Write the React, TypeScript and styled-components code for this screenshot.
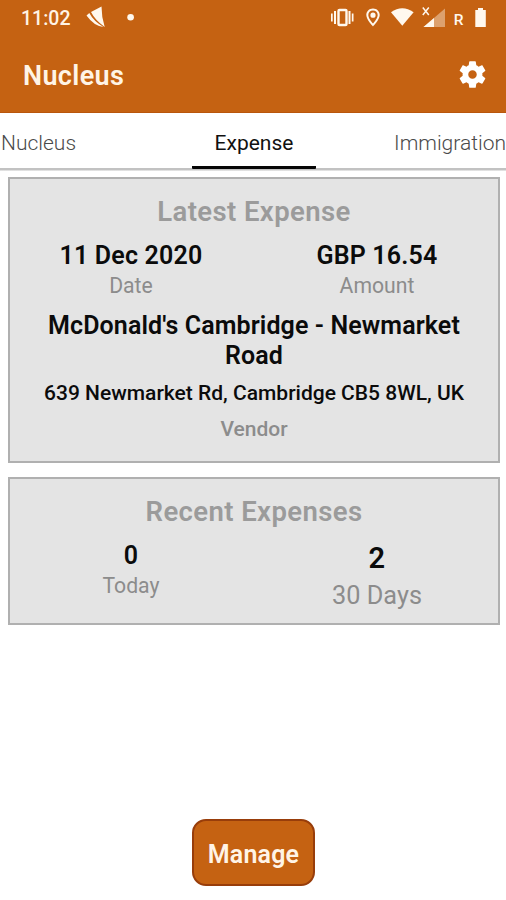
import React from "react";
import styled, { createGlobalStyle } from "styled-components";

const GlobalStyle = createGlobalStyle`
  * { box-sizing: border-box; }
  body { margin: 0; background: #fff; }
`;

const Screen = styled.main`
  width: 506px;
  height: 900px;
  display: flex;
  flex-direction: column;
  overflow: hidden;
  background: #fff;
  font-family: Roboto, "Liberation Sans", sans-serif;
  color: #0b0b0b;
`;

const Header = styled.header`
  height: 113px;
  background: #c56212;
  border-bottom: 1px solid #b9560c;
  color: #fff4e6;
`;

const StatusBar = styled.div`
  height: 36px;
  padding: 0 18px 0 21px;
  display: flex;
  align-items: center;
  justify-content: space-between;
`;

const StatusGroup = styled.div`
  display: flex;
  align-items: center;
`;

const Clock = styled.span`
  width: 65px;
  padding-top: 1px;
  font-size: 19.5px;
  font-weight: 500;
  line-height: 36px;
`;

const AppBar = styled.div`
  height: 76px;
  padding: 0 17px 0 23px;
  display: flex;
  align-items: center;
  justify-content: space-between;
`;

const AppTitle = styled.h1`
  margin: 3px 0 0;
  font-size: 27px;
  font-weight: 600;
  letter-spacing: 0.35px;
  line-height: 32px;
`;

const IconButton = styled.button`
  display: flex;
  padding: 0;
  border: 0;
  background: none;
`;

const Tabs = styled.nav`
  height: 58px;
  display: grid;
  grid-template-columns: 192px 124px 1fr;
  background: linear-gradient(#c2c2c2, #c2c2c2) 0 55px / 100% 2.5px no-repeat;
`;

const Tab = styled.div<{ $active?: boolean; $align: string }>`
  height: ${(p) => (p.$active ? 56 : 57)}px;
  padding: 17px 0 0 ${(p) => (p.$align === "left" ? 1 : 0)}px;
  text-align: ${(p) => p.$align};
  font-size: 21px;
  font-weight: ${(p) => (p.$active ? 400 : 300)};
  line-height: 27px;
  color: ${(p) => (p.$active ? "#111" : "#4a4a4a")};
  border-bottom: ${(p) => (p.$active ? "3px solid #050505" : "0")};
  border-radius: 1px;
`;

const Cards = styled.section`
  padding: 6px 6px 0 8px;
  display: flex;
  flex-direction: column;
  gap: 14px;
`;

const Card = styled.article<{ $height: number }>`
  height: ${(p) => p.$height}px;
  padding-top: 17px;
  background: #e4e4e4;
  border: 2px solid #b0b0b0;
  text-align: center;
`;

const CardTitle = styled.h2`
  margin: 0;
  font-size: 27.5px;
  font-weight: 600;
  letter-spacing: 0.4px;
  line-height: 32px;
  color: #9b9b9b;
`;

const Columns = styled.div`
  display: grid;
  grid-template-columns: 1fr 1fr;
  margin: 12px -2px 0;
`;

const Value = styled.div<{ $large?: boolean }>`
  font-size: ${(p) => (p.$large ? 29 : 25)}px;
  font-weight: 600;
  letter-spacing: 0.2px;
  line-height: ${(p) => (p.$large ? 36 : 32)}px;
`;

const Label = styled.div<{ $large?: boolean }>`
  margin-top: ${(p) => (p.$large ? 5 : 1)}px;
  font-size: ${(p) => (p.$large ? 25.3 : 21.2)}px;
  line-height: ${(p) => (p.$large ? 30 : 26)}px;
  color: #8c8c8c;
`;

const VendorName = styled.div`
  margin: 12px auto 0;
  width: 440px;
  font-size: 25px;
  font-weight: 600;
  letter-spacing: 0.11px;
  line-height: 29.5px;
`;

const Address = styled.div`
  margin-top: 10px;
  font-size: 21px;
  font-weight: 500;
  line-height: 26px;
`;

const VendorLabel = styled.div`
  margin-top: 11px;
  font-size: 21px;
  font-weight: 500;
  line-height: 25px;
  color: #8c8c8c;
`;

const Footer = styled.footer`
  margin-top: auto;
  padding: 0 0 14px 1px;
  display: flex;
  justify-content: center;
`;

const ManageButton = styled.button`
  width: 123px;
  height: 67px;
  padding: 4px 0 0;
  background: #c56212;
  border: 2px solid #983d0a;
  border-radius: 14px;
  font: 600 25px/32px Roboto, "Liberation Sans", sans-serif;
  letter-spacing: 0.2px;
  color: #fff4e6;
`;

const LeftIcons = () => (
  <svg width="50" height="36" viewBox="0 0 50 36" fill="#fff8ee">
    <path d="M5 12L15.500 6.500Q15.500 17 18.700 27Q9 20 5 12Z" />
    <path d="M.5 15.500L3.300 13Q7.500 21 17.500 27Q8 26 .5 15.500Z" />
    <circle cx="44.600" cy="17.300" r="3.300" />
  </svg>
);

const RightIcons = () => (
  <svg width="158" height="36" viewBox="330 0 158 36" fill="#fff8ee">
    <path d="M331 13.500h1.700v8H331zM334 11h2v13h-2zM348.500 11h2v13h-2zM351.800 13.500h1.700v8h-1.700z" />
    <rect x="338.500" y="10" width="8" height="15" rx="1" fill="none" stroke="#fff8ee" strokeWidth="2.400" />
    <path
      fillRule="evenodd"
      d="M373 8.500c-3.900 0-6.700 2.900-6.700 6.600 0 4.800 6.700 11.400 6.700 11.400s6.700-6.600 6.700-11.400c0-3.700-2.800-6.600-6.700-6.600zm0 2c2.800 0 4.700 2 4.700 4.600 0 2.900-2.900 6.500-4.700 8.500-1.800-2-4.700-5.600-4.700-8.500 0-2.600 1.900-4.600 4.700-4.600zm0 2.100a2.600 2.600 0 1 0 0 5.200 2.600 2.600 0 0 0 0-5.200z"
    />
    <path d="M391 12.300Q402.300 4 413.600 12.300L402.300 25.800Z" />
    <path d="M445 8.500V27H423.500Z" opacity=".42" />
    <path d="M434 18V27H423.500Z" />
    <path d="M422.800 7.500l6 7.500M428.800 7.500l-6 7.500" stroke="#fff8ee" strokeWidth="1.500" />
    <text x="453.800" y="24.600" fontSize="15.500" fontWeight="500" fontFamily="Roboto, sans-serif">R</text>
    <path d="M478 8h5v2h2.800v17H475.300V10H478z" />
  </svg>
);

const GearIcon = () => (
  <svg width="33" height="33" viewBox="0 0 24 24" fill="#fff">
    <path d="M19.140 12.940c.04-.3.06-.61.06-.94 0-.32-.02-.64-.07-.94l2.030-1.580c.18-.14.23-.41.12-.61l-1.920-3.320c-.12-.22-.37-.29-.59-.22l-2.390.96c-.5-.38-1.030-.7-1.620-.94l-.36-2.540c-.04-.24-.24-.41-.48-.41h-3.840c-.24 0-.43.17-.47.41l-.36 2.540c-.59.24-1.130.57-1.620.94l-2.390-.96c-.22-.08-.47 0-.59.22L2.740 8.870c-.12.21-.08.47.12.61l2.030 1.580c-.05.3-.09.63-.09.94s.02.64.07.94l-2.030 1.580c-.18.14-.23.41-.12.61l1.920 3.320c.12.22.37.29.59.22l2.390-.96c.5.38 1.030.7 1.620.94l.36 2.540c.05.24.24.41.48.41h3.840c.24 0 .44-.17.47-.41l.36-2.540c.59-.24 1.130-.56 1.620-.94l2.390.96c.22.08.47 0 .59-.22l1.920-3.320c.12-.22.07-.47-.12-.61l-2.010-1.580zM12 15.100c-1.700 0-3.100-1.400-3.100-3.100s1.400-3.100 3.100-3.100 3.100 1.400 3.100 3.100-1.400 3.100-3.100 3.100z" />
  </svg>
);

export default function App() {
  return (
    <Screen>
      <GlobalStyle />
      <Header>
        <StatusBar>
          <StatusGroup>
            <Clock>11:02</Clock>
            <LeftIcons />
          </StatusGroup>
          <RightIcons />
        </StatusBar>
        <AppBar>
          <AppTitle>Nucleus</AppTitle>
          <IconButton aria-label="Settings">
            <GearIcon />
          </IconButton>
        </AppBar>
      </Header>
      <Tabs>
        <Tab $align="left">Nucleus</Tab>
        <Tab $align="center" $active>Expense</Tab>
        <Tab $align="right">Immigration</Tab>
      </Tabs>
      <Cards>
        <Card $height={286}>
          <CardTitle>Latest Expense</CardTitle>
          <Columns>
            <div>
              <Value>11 Dec 2020</Value>
              <Label>Date</Label>
            </div>
            <div>
              <Value>GBP 16.54</Value>
              <Label>Amount</Label>
            </div>
          </Columns>
          <VendorName>McDonald's Cambridge - Newmarket Road</VendorName>
          <Address>639 Newmarket Rd, Cambridge CB5 8WL, UK</Address>
          <VendorLabel>Vendor</VendorLabel>
        </Card>
        <Card $height={148}>
          <CardTitle>Recent Expenses</CardTitle>
          <Columns>
            <div>
              <Value>0</Value>
              <Label>Today</Label>
            </div>
            <div>
              <Value $large>2</Value>
              <Label $large>30 Days</Label>
            </div>
          </Columns>
        </Card>
      </Cards>
      <Footer>
        <ManageButton>Manage</ManageButton>
      </Footer>
    </Screen>
  );
}
